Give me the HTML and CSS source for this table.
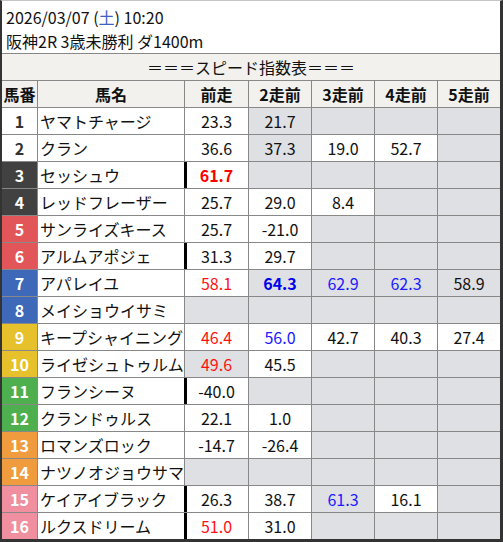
FILE: index.html
```html
<!DOCTYPE html>
<html lang="ja">
<head>
<meta charset="utf-8">
<title>スピード指数表</title>
<link rel="stylesheet" href="styles.css">
</head>
<body>
<div class="frame">
  <div class="info">
    <div class="line">2026/03/07 (<span class="sat">土</span>) 10:20</div>
    <div class="line">阪神2R 3歳未勝利 ダ1400m</div>
  </div>
  <div class="caption">＝＝＝スピード指数表＝＝＝</div>
  <div class="row head">
    <div class="c num">馬番</div><div class="c name">馬名</div><div class="c v0">前走</div><div class="c v">2走前</div><div class="c v">3走前</div><div class="c v">4走前</div><div class="c v last">5走前</div>
  </div>
  <div class="row">
    <div class="c num w1">1</div><div class="c name">ヤマトチャージ</div><div class="c v0">23.3</div><div class="c v g">21.7</div><div class="c v g"></div><div class="c v g"></div><div class="c v g last"></div>
  </div>
  <div class="row">
    <div class="c num w1">2</div><div class="c name">クラン</div><div class="c v0">36.6</div><div class="c v g">37.3</div><div class="c v">19.0</div><div class="c v">52.7</div><div class="c v g last"></div>
  </div>
  <div class="row mark">
    <div class="c num w2">3</div><div class="c name">セッシュウ</div><div class="c v0 red b">61.7</div><div class="c v g"></div><div class="c v g"></div><div class="c v g"></div><div class="c v g last"></div>
  </div>
  <div class="row">
    <div class="c num w2">4</div><div class="c name">レッドフレーザー</div><div class="c v0">25.7</div><div class="c v">29.0</div><div class="c v">8.4</div><div class="c v g"></div><div class="c v g last"></div>
  </div>
  <div class="row">
    <div class="c num w3">5</div><div class="c name">サンライズキース</div><div class="c v0">25.7</div><div class="c v">-21.0</div><div class="c v g"></div><div class="c v g"></div><div class="c v g last"></div>
  </div>
  <div class="row mark">
    <div class="c num w3">6</div><div class="c name">アルムアポジェ</div><div class="c v0">31.3</div><div class="c v">29.7</div><div class="c v g"></div><div class="c v g"></div><div class="c v g last"></div>
  </div>
  <div class="row">
    <div class="c num w4">7</div><div class="c name">アパレイユ</div><div class="c v0 red">58.1</div><div class="c v g blue b">64.3</div><div class="c v g blue">62.9</div><div class="c v g blue">62.3</div><div class="c v g last">58.9</div>
  </div>
  <div class="row">
    <div class="c num w4">8</div><div class="c name">メイショウイサミ</div><div class="c v0 g"></div><div class="c v g"></div><div class="c v g"></div><div class="c v g"></div><div class="c v g last"></div>
  </div>
  <div class="row">
    <div class="c num w5">9</div><div class="c name">キープシャイニング</div><div class="c v0 red">46.4</div><div class="c v blue">56.0</div><div class="c v">42.7</div><div class="c v">40.3</div><div class="c v last">27.4</div>
  </div>
  <div class="row">
    <div class="c num w5">10</div><div class="c name">ライゼシュトゥルム</div><div class="c v0 g red">49.6</div><div class="c v">45.5</div><div class="c v g"></div><div class="c v g"></div><div class="c v g last"></div>
  </div>
  <div class="row mark">
    <div class="c num w6">11</div><div class="c name">フランシーヌ</div><div class="c v0">-40.0</div><div class="c v g"></div><div class="c v g"></div><div class="c v g"></div><div class="c v g last"></div>
  </div>
  <div class="row">
    <div class="c num w6">12</div><div class="c name">クランドゥルス</div><div class="c v0">22.1</div><div class="c v">1.0</div><div class="c v g"></div><div class="c v g"></div><div class="c v g last"></div>
  </div>
  <div class="row">
    <div class="c num w7">13</div><div class="c name">ロマンズロック</div><div class="c v0">-14.7</div><div class="c v">-26.4</div><div class="c v g"></div><div class="c v g"></div><div class="c v g last"></div>
  </div>
  <div class="row">
    <div class="c num w7">14</div><div class="c name">ナツノオジョウサマ</div><div class="c v0 g"></div><div class="c v g"></div><div class="c v g"></div><div class="c v g"></div><div class="c v g last"></div>
  </div>
  <div class="row mark">
    <div class="c num w8">15</div><div class="c name">ケイアイブラック</div><div class="c v0">26.3</div><div class="c v">38.7</div><div class="c v g blue">61.3</div><div class="c v">16.1</div><div class="c v g last"></div>
  </div>
  <div class="row mark final">
    <div class="c num w8">16</div><div class="c name">ルクスドリーム</div><div class="c v0 red">51.0</div><div class="c v">31.0</div><div class="c v g"></div><div class="c v g"></div><div class="c v g last"></div>
  </div>
</div>
</body>
</html>
```
FILE: styles.css
```css
html, body {
  margin: 0;
  padding: 0;
  background: #ffffff;
}

body {
  font-family: "Noto Sans CJK JP", "Noto Sans", sans-serif;
  font-size: 16px;
  color: #111111;
}

.frame {
  width: 498px;
  border-top: 1px solid #c4c4c4;
  border-left: 2px solid #333333;
  border-right: 3px solid #333333;
  border-bottom: 3px solid #333333;
  background: #ffffff;
}

.info {
  padding: 4px 0 0 4px;
  height: 48px;
  border-bottom: 1px solid #888888;
}

.line {
  height: 24px;
  line-height: 24px;
  white-space: nowrap;
}

.sat {
  color: #3d62c4;
}

.caption {
  height: 26px;
  line-height: 26px;
  text-align: center;
  background: #f2f1ed;
  border-bottom: 1px solid #888888;
}

.row {
  display: flex;
  height: 26px;
  border-bottom: 1px solid #888888;
}

.row.final {
  border-bottom: 0;
}

.c {
  box-sizing: border-box;
  height: 26px;
  display: flex;
  align-items: center;
  justify-content: center;
  border-right: 1px solid #888888;
  background: #ffffff;
  white-space: nowrap;
  line-height: 26px;
}

.c.last {
  border-right: 0;
}

.num {
  width: 36px;
  font-weight: 700;
  color: #ffffff;
}

.name {
  width: 147px;
  justify-content: flex-start;
  padding-left: 2px;
  overflow: hidden;
}

.v0 {
  width: 64px;
}

.v {
  width: 63px;
}

.c.last {
  width: 62px;
}

.head .c {
  background: #f2f1ed;
  font-weight: 700;
  color: #111111;
}

.head .name {
  justify-content: center;
  padding-left: 0;
}

.g {
  background: #dfe0e4;
}

.red {
  color: #ff1111;
}

.blue {
  color: #1a1aff;
}

.b {
  font-weight: 700;
}

.red.b {
  color: #ff0000;
}

.blue.b {
  color: #0000ee;
}

.mark .name {
  border-right-color: #000000;
}

.mark .v0 {
  box-shadow: inset 2px 0 0 #000000;
}

.w1 { background: #ffffff; color: #333333; }
.w2 { background: #414141; }
.w3 { background: #e2565a; }
.w4 { background: #3e69b8; }
.w5 { background: #e6c12c; }
.w6 { background: #4daf4e; }
.w7 { background: #f09b3e; }
.w8 { background: #ef8fa0; }
```
